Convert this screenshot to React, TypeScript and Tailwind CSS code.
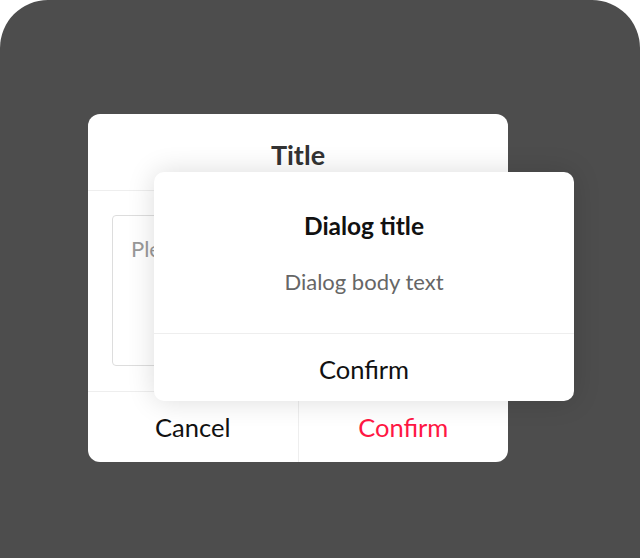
import React from "react";

export default function App() {
  return (
    <div className="w-[640px] h-[558px] bg-white" style={{ fontFamily: "Lato, 'Noto Sans', sans-serif" }}>
      <div className="relative w-full h-full bg-[#4d4d4d] rounded-t-[48px] pt-[114px] pl-[88px]">
        {/* back dialog */}
        <div className="w-[420px] h-[348px] bg-white rounded-[12px] flex flex-col overflow-hidden">
          <div className="h-[77px] shrink-0 flex items-center justify-center border-b border-[#eeeeee]">
            <h2 className="text-[27px] font-bold text-[#333333] leading-none mt-[4px]">Title</h2>
          </div>
          <div className="flex-1 px-6 pt-6 pb-[25px]">
            <div className="h-full border border-[#dddddd] rounded-[4px] px-[18px] pt-[18px]">
              <p className="text-[22px] text-[#999999] leading-[30px]">Please enter</p>
            </div>
          </div>
          <div className="h-[71px] shrink-0 flex border-t border-[#eeeeee]">
            <button className="flex-1 text-[25.5px] text-[#111111] border-r border-[#eeeeee]">Cancel</button>
            <button className="flex-1 text-[25.5px] text-[#ff1744]">Confirm</button>
          </div>
        </div>

        {/* front dialog */}
        <div className="absolute left-[154px] top-[172px] w-[420px] h-[229px] bg-white rounded-[10px] shadow-[0_0_28px_rgba(0,0,0,0.14)] flex flex-col">
          <div className="h-[162px] shrink-0 flex flex-col items-center pt-[39px] border-b border-[#eeeeee]">
            <h3 className="text-[24.5px] font-bold text-[#111111] leading-[30px]">Dialog title</h3>
            <p className="mt-[27px] text-[22px] text-[#666666] leading-[28px]">Dialog body text</p>
          </div>
          <button className="flex-1 text-[25.5px] text-[#111111] pt-1">Confirm</button>
        </div>
      </div>
    </div>
  );
}
